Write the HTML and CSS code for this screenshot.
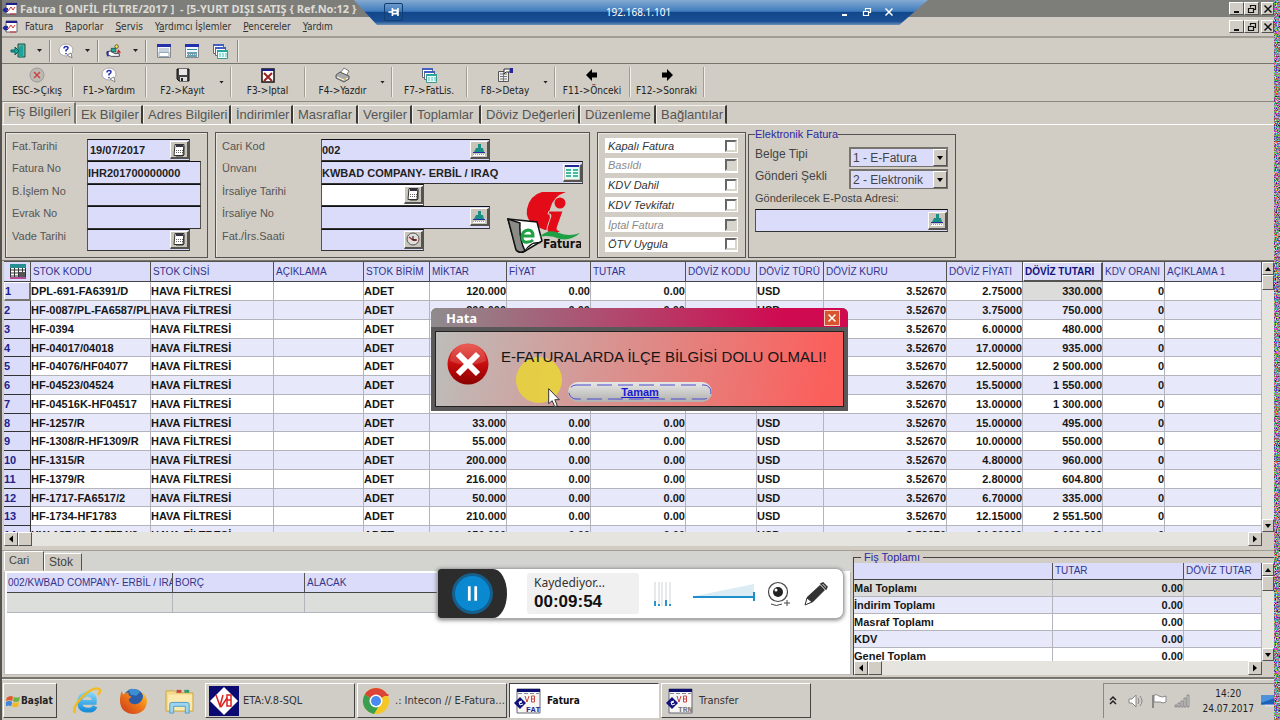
FILE: index.html
```html
<!DOCTYPE html>
<html lang="tr">
<head>
<meta charset="utf-8">
<title>Fatura</title>
<link rel="stylesheet" href="styles.css">
</head>
<body>
<svg class="defs" aria-hidden="true">
  <defs>
    <linearGradient id="gBall" x1="0" y1="0" x2="0" y2="1"><stop offset="0" stop-color="#e8433a"/><stop offset=".5" stop-color="#c80d0d"/><stop offset="1" stop-color="#8a0000"/></linearGradient>
    <linearGradient id="gIe" x1="0" y1="0" x2="0" y2="1"><stop offset="0" stop-color="#7fd4f8"/><stop offset="1" stop-color="#1b8fd8"/></linearGradient>
    <linearGradient id="gFox" x1="1" y1="0" x2="0" y2="1"><stop offset="0" stop-color="#ffcb3a"/><stop offset=".45" stop-color="#f07a18"/><stop offset="1" stop-color="#c7361a"/></linearGradient>
    <symbol id="app" viewBox="0 0 16 14"><path d="M4 1h11v11H4z" fill="#fff" stroke="#667"/><path d="M4 1h11v2H4z" fill="#1a1f8a"/><path d="M6 9l3-4 2 3 2-3" stroke="#c33" fill="none"/><path d="M1 8a3 3 0 0 1 5-1L4 9h2a3 3 0 0 1-5-1z" fill="#2228a0" stroke="#2228a0"/><path d="M8 12h6" stroke="#c33"/></symbol>
    <symbol id="help" viewBox="0 0 16 16"><ellipse cx="8" cy="7" rx="7" ry="6" fill="#fff" stroke="#aaa"/><path d="M9 12l5 3-1-5z" fill="#fff" stroke="#888"/><path d="M6 5.500q0-2 2-2t2 1.500q0 1.200-2 2.200V8.500M8 10v1.200" fill="none" stroke="#2430b0" stroke-width="1.500"/></symbol>
    <symbol id="door" viewBox="0 0 16 16"><path d="M8 1h7v13H8z" fill="#7a8" stroke="#155"/><path d="M9 4l4-2v11l-4 2z" fill="#19a59b"/><path d="M1 7h4V4l4 4-4 4V9H1z" fill="#15a79c" stroke="#066"/></symbol>
    <symbol id="tools" viewBox="0 0 18 16"><path d="M1 9l4-1 5 3h5v3H6l-5-2z" fill="#fff" stroke="#335"/><path d="M1 8h2v6H1z" fill="#2430a0"/><circle cx="12" cy="3" r="2" fill="#f4e638" stroke="#554"/><path d="M6 5h5v4H6z" fill="#2aa79c" stroke="#155"/><path d="M14 6l3 4h-5z" fill="#b22"/></symbol>
    <symbol id="win" viewBox="0 0 16 16"><path d="M1.500 1.500h13v13h-13z" fill="#f3f7ff" stroke="#888"/><path d="M1 1h14v3H1z" fill="#2430a8"/><path d="M3 6h10M3 8h10" stroke="#9ab"/><path d="M3 9.500h10v4H3z" fill="#fff" stroke="#9ab"/></symbol>
    <symbol id="winf" viewBox="0 0 16 16"><path d="M1.500 1.500h13v13h-13z" fill="#f3f7ff" stroke="#888"/><path d="M1 1h14v3H1z" fill="#2430a8"/><path d="M3 6.500h10" stroke="#38a"/><path d="M3 9h10v5H3z" fill="#6d9fae"/><path d="M3 11.500h10" stroke="#cfe2e8" stroke-dasharray="1 1"/></symbol>
    <symbol id="wins" viewBox="0 0 16 16"><path d="M1.500 1.500h10v9h-10z" fill="#fff" stroke="#667"/><path d="M1 1h11v2H1z" fill="#4360c0"/><path d="M3.500 4.500h10v8h-10z" fill="#fff" stroke="#667"/><path d="M3 4h11v2H3z" fill="#4360c0"/><path d="M5.500 7.500h10v8h-10z" fill="#e6fffa" stroke="#498"/><path d="M5 7h11v2H5z" fill="#2aa79c"/><path d="M7 11h8M7 13h8" stroke="#5bb" stroke-dasharray="2 1"/></symbol>
    <symbol id="esc" viewBox="0 0 16 16"><circle cx="8" cy="8" r="7" fill="#bdbab2" stroke="#999"/><path d="M5 5l6 6M11 5l-6 6" stroke="#cc4444" stroke-width="1.500"/></symbol>
    <symbol id="disk" viewBox="0 0 16 16"><path d="M2 2h12v12H4l-2-2z" fill="#444" stroke="#111"/><path d="M4 2h8v6H4z" fill="#e8e8e8"/><path d="M5 10h7v4H5z" fill="#ddd"/><path d="M6 11h2v3H6z" fill="#222"/></symbol>
    <symbol id="cancel" viewBox="0 0 16 16"><path d="M2 2h12v13H2z" fill="#fff" stroke="#111" stroke-width="1.500"/><path d="M2 2h12v2H2z" fill="#1a1f8a"/><path d="M4 6l8 8M12 6l-8 8" stroke="#a02020" stroke-width="2"/></symbol>
    <symbol id="print" viewBox="0 0 16 16"><path d="M5 6l4-5 5 3-3 5z" fill="#fff" stroke="#777"/><path d="M1 8l4-3 9 4v3l-5 3-8-4z" fill="#aaa" stroke="#555"/><path d="M2 10l7 3 4-2" stroke="#fff" fill="none"/><path d="M9 12h2" stroke="#c9b23c" stroke-width="1.500"/></symbol>
    <symbol id="detail" viewBox="0 0 16 16"><path d="M1.500 4.500h10v10h-10z" fill="#eee" stroke="#555"/><path d="M3 7h7M3 9.500h7M3 12h7M6.500 6v8" stroke="#777"/><path d="M7 2h6v3H9l-2 2z" fill="#fff" stroke="#333"/><path d="M13 1h3v5h-3z" fill="#22289a"/></symbol>
    <symbol id="left" viewBox="0 0 12 12"><path d="M0 6l6-6v3.500h5v5H6V12z"/></symbol>
    <symbol id="right" viewBox="0 0 12 12"><path d="M12 6L6 0v3.500H1v5h5V12z"/></symbol>
    <symbol id="cal" viewBox="0 0 14 14"><path d="M3 1.500h9l-1 11H2z" fill="#fff" stroke="#333"/><path d="M4 3h7" stroke="#334" stroke-width="2"/><path d="M4 7.500h7M4 9.500h7" stroke="#666" stroke-dasharray="1 1"/><path d="M12 3v9l-1 1H4" fill="none" stroke="#333"/></symbol>
    <symbol id="hand" viewBox="0 0 14 14"><path d="M6 1h3v4h2l1 4H2l2-4h2z" fill="#1a8f88"/><path d="M1 9h12v1H1z" fill="#2230a0"/><path d="M1 11h12v2H1z" fill="#fff"/><path d="M1 11.500h12" stroke="#b8a830" stroke-dasharray="1 1"/></symbol>
    <symbol id="list" viewBox="0 0 14 14"><path d="M0 0h14v14H0z" fill="#e8fff6"/><path d="M0 0h14v2H0z" fill="#22289a"/><path d="M1 5h5M8 5h5M1 8h5M8 8h5M1 11h5M8 11h5" stroke="#14a088" stroke-width="1.500"/></symbol>
    <symbol id="clock" viewBox="0 0 14 14"><circle cx="7" cy="7" r="6" fill="#ddd" stroke="#555"/><path d="M3 5l4 3h4" fill="none" stroke="#a22" stroke-width="1.300"/><path d="M7 4v4h3" fill="none" stroke="#111"/></symbol>
    <symbol id="grid" viewBox="0 0 16 15"><path d="M0 0h16v15H0z" fill="#fff"/><path d="M.5.500h15v14H.5zM.5 6h15M.5 9h15M.5 12h15M4.500 3v12M8.500 3v12M12.500 3v12" fill="none" stroke="#333"/><path d="M0 0h16v4H0z" fill="#268e90"/><path d="M9 8h6v5H9z" fill="#555"/><path d="M0 14h16" stroke="#b24a9a" stroke-width="2"/></symbol>
    <symbol id="sup" viewBox="0 0 8 8"><path d="M4 2l3 4H1z"/></symbol>
    <symbol id="sdn" viewBox="0 0 8 8"><path d="M4 6l3-4H1z"/></symbol>
    <symbol id="slf" viewBox="0 0 8 8"><path d="M2 4l4-3.500v7z"/></symbol>
    <symbol id="srt" viewBox="0 0 8 8"><path d="M6 4L2 .5v7z"/></symbol>
    <symbol id="wmin" viewBox="0 0 10 10"><path d="M2 8h5" stroke="currentColor" stroke-width="2"/></symbol>
    <symbol id="wres" viewBox="0 0 10 10"><path d="M3.500 3.500v-2h5v4h-2M1.500 4.500h5v4h-5zM3 1.500h6M1 4.500h6" fill="none" stroke="currentColor" stroke-width="1.200"/></symbol>
    <symbol id="wcls" viewBox="0 0 10 10"><path d="M1.500 1.500l7 7M8.500 1.500l-7 7" stroke="currentColor" stroke-width="1.500"/></symbol>
    <symbol id="v8" viewBox="0 0 26 26"><path d="M3 1h23v24H3z" fill="#f6f6f4" stroke="#667"/><path d="M3 1h23v3H3z" fill="#0d1070"/><path d="M4 5.500h21" stroke="#889" stroke-dasharray="4 2"/><path d="M11 8l2 6 2-6" fill="none" stroke="#c44"/><path d="M17.500 8h3v6h-3zM17.500 11h3" fill="none" stroke="#c44"/><path d="M0 15l6-6 6 6-6 6z" fill="#12127c"/><path d="M8 13l-3 1 1 3 3-1M5 15l3-1" stroke="#fff" fill="none"/></symbol>
  </defs>
</svg>

<div class="app">
  <header class="titlebar">
    <svg class="i16"><use href="#app"/></svg>
    <h1>Fatura [ ONFİL FİLTRE/2017 ]&nbsp; - [5-YURT DIŞI SATIŞ { Ref.No:12 }</h1>
    <div class="winbtns"><button aria-label="Simge durumu"><svg><use href="#wmin"/></svg></button><button aria-label="Geri yükle"><svg><use href="#wres"/></svg></button><button aria-label="Kapat"><svg><use href="#wcls"/></svg></button></div>
  </header>
  <nav class="menubar">
    <svg class="i16"><use href="#app"/></svg>
    <button>Fatura</button><button><u>R</u>aporlar</button><button><u>S</u>ervis</button><button>Y<u>a</u>rdımcı İşlemler</button><button><u>P</u>encereler</button><button><u>Y</u>ardım</button>
    <div class="winbtns"><button aria-label="Simge durumu"><svg><use href="#wmin"/></svg></button><button aria-label="Geri yükle"><svg><use href="#wres"/></svg></button><button aria-label="Kapat"><svg><use href="#wcls"/></svg></button></div>
  </nav>
  <div class="quickbar">
    <div class="qgroup"><button aria-label="Çıkış"><svg class="i16"><use href="#door"/></svg></button><i class="caret"></i></div>
    <div class="qgroup"><button aria-label="Yardım"><svg class="i16"><use href="#help"/></svg></button><i class="caret"></i></div>
    <div class="qgroup"><button aria-label="Araçlar"><svg class="i16"><use href="#tools"/></svg></button><i class="caret"></i></div>
    <div class="qgroup wide"><button aria-label="Pencere"><svg class="i16"><use href="#win"/></svg></button><button aria-label="Döşe"><svg class="i16"><use href="#winf"/></svg></button><button aria-label="Basamakla"><svg class="i16"><use href="#wins"/></svg></button></div>
  </div>
  <div class="actions">
    <div><button><svg class="i16"><use href="#esc"/></svg>ESC-&gt;Çıkış</button></div>
    <div><button><svg class="i16"><use href="#help"/></svg>F1-&gt;Yardım</button></div>
    <div class="drop"><button><svg class="i16"><use href="#disk"/></svg>F2-&gt;Kayıt</button><i class="caret"></i></div>
    <div><button><svg class="i16"><use href="#cancel"/></svg>F3-&gt;Iptal</button></div>
    <div class="drop"><button><svg class="i16"><use href="#print"/></svg>F4-&gt;Yazdır</button><i class="caret"></i></div>
    <div><button><svg class="i16"><use href="#wins"/></svg>F7-&gt;FatLis.</button></div>
    <div class="drop"><button><svg class="i16"><use href="#detail"/></svg>F8-&gt;Detay</button><i class="caret"></i></div>
    <div><button><svg class="arrow"><use href="#left"/></svg>F11-&gt;Önceki</button></div>
    <div><button><svg class="arrow"><use href="#right"/></svg>F12-&gt;Sonraki</button></div>
  </div>
  <div class="tabs">
    <button class="on">Fiş Bilgileri</button><button>Ek Bilgiler</button><button>Adres Bilgileri</button><button>İndirimler</button><button>Masraflar</button><button>Vergiler</button><button>Toplamlar</button><button>Döviz Değerleri</button><button>Düzenleme</button><button>Bağlantılar</button>
  </div>

  <form class="form">
    <section class="panel invoice">
      <label for="f1">Fat.Tarihi</label><div class="field w-date inset"><input id="f1" value="19/07/2017"><button type="button" aria-label="Takvim"><svg><use href="#cal"/></svg></button></div>
      <label for="f2">Fatura No</label><div class="field"><input id="f2" value="IHR201700000000"></div>
      <label for="f3">B.İşlem No</label><div class="field"><input id="f3"></div>
      <label for="f4">Evrak No</label><div class="field"><input id="f4"></div>
      <label for="f5">Vade Tarihi</label><div class="field w-date"><input id="f5"><button type="button" aria-label="Takvim"><svg><use href="#cal"/></svg></button></div>
    </section>
    <section class="panel account">
      <label for="a1">Cari Kod</label><div class="field w-code"><input id="a1" value="002"><button type="button" aria-label="Seç"><svg><use href="#hand"/></svg></button></div>
      <label for="a2">Ünvanı</label><div class="field"><input id="a2" value="KWBAD COMPANY- ERBİL / IRAQ"><button type="button" aria-label="Liste"><svg><use href="#list"/></svg></button></div>
      <label for="a3">İrsaliye Tarihi</label><div class="field w-date white"><input id="a3"><button type="button" aria-label="Takvim"><svg><use href="#cal"/></svg></button></div>
      <label for="a4">İrsaliye No</label><div class="field w-code"><input id="a4"><button type="button" aria-label="Seç"><svg><use href="#hand"/></svg></button></div>
      <label for="a5">Fat./İrs.Saati</label><div class="field w-date"><input id="a5"><button type="button" aria-label="Saat"><svg><use href="#clock"/></svg></button></div>
      <svg class="logo" viewBox="0 0 74 62" role="img" aria-label="e-Fatura">
        <path d="M35 1h24q-13 4-16 17-2 13 5 20l-10 1-10-4q-10-7-8-17Q23 4 35 1z" fill="#e30b17"/>
        <circle cx="53" cy="12" r="5.500" fill="#e30b17"/>
        <path d="M42 20h14l-6 17q0 4 4 2-3 5-10 4-6-2-3-9l3-9q0-3-3-2z" fill="#e30b17" stroke="#d1cdc4"/>
        <path d="M1 28l9 32q4 3 8 0l17-10-5-19z" fill="#fff" stroke="#111" stroke-width="1.500"/>
        <path d="M1 28l8 31q4 4 9 1-6-12-5-28z" fill="#8b8b88" stroke="#111" stroke-width="1.500"/>
        <path d="M17 60q8-12 18-8l-9 1z" fill="#111"/>
        <path d="M15 45h11q0-6-5-6-6 1-6 7t6 5q3 0 5-2" fill="none" stroke="#20a045" stroke-width="3"/>
        <path d="M32 46q10-9 20-4 10 4 21 0-9 8-20 6-11-5-21-2z" fill="#20a045"/>
        <text x="36" y="57">Fatura</text>
      </svg>
    </section>
    <section class="panel checks">
      <label>Kapalı Fatura<input type="checkbox"></label>
      <label class="off">Basıldı<input type="checkbox" disabled></label>
      <label>KDV Dahil<input type="checkbox"></label>
      <label>KDV Tevkifatı<input type="checkbox"></label>
      <label class="off">İptal Fatura<input type="checkbox" disabled></label>
      <label>ÖTV Uygula<input type="checkbox"></label>
    </section>
    <fieldset class="einv">
      <legend>Elektronik Fatura</legend>
      <div class="pair"><label for="e1">Belge Tipi</label><span class="combo"><select id="e1"><option>1 - E-Fatura</option></select><i><svg><use href="#sdn"/></svg></i></span></div>
      <div class="pair"><label for="e2">Gönderi Şekli</label><span class="combo"><select id="e2"><option>2 - Elektronik</option></select><i><svg><use href="#sdn"/></svg></i></span></div>
      <label for="e3">Gönderilecek E-Posta Adresi:</label>
      <div class="field mail"><input id="e3"><button type="button" aria-label="Seç"><svg><use href="#hand"/></svg></button></div>
    </fieldset>
  </form>

  <div class="gridbox">
    <div class="clip">
    <table class="stock">
      <colgroup><col class="c27"><col class="c120"><col class="c123"><col class="c90"><col class="c66"><col class="c77"><col class="c84"><col class="c95"><col class="c71"><col class="c67"><col class="c123"><col class="c76"><col class="c80"><col class="c62"><col></colgroup>
      <thead><tr><th class="corner"><svg><use href="#grid"/></svg></th><th>STOK KODU</th><th>STOK CİNSİ</th><th>AÇIKLAMA</th><th>STOK BİRİM</th><th>MİKTAR</th><th>FİYAT</th><th>TUTAR</th><th>DÖVİZ KODU</th><th>DÖVİZ TÜRÜ</th><th>DÖVİZ KURU</th><th>DÖVİZ FİYATI</th><th class="sel">DÖVİZ TUTARI</th><th>KDV ORANI</th><th>AÇIKLAMA 1</th></tr></thead>
      <tbody>
        <tr><th class="cur">1</th><td>DPL-691-FA6391/D</td><td>HAVA FİLTRESİ</td><td></td><td>ADET</td><td>120.000</td><td>0.00</td><td>0.00</td><td></td><td>USD</td><td>3.52670</td><td>2.75000</td><td class="hot">330.000</td><td>0</td><td></td></tr>
        <tr><th>2</th><td>HF-0087/PL-FA6587/PL</td><td>HAVA FİLTRESİ</td><td></td><td>ADET</td><td>200.000</td><td>0.00</td><td>0.00</td><td></td><td>USD</td><td>3.52670</td><td>3.75000</td><td>750.000</td><td>0</td><td></td></tr>
        <tr><th>3</th><td>HF-0394</td><td>HAVA FİLTRESİ</td><td></td><td>ADET</td><td>80.000</td><td>0.00</td><td>0.00</td><td></td><td>USD</td><td>3.52670</td><td>6.00000</td><td>480.000</td><td>0</td><td></td></tr>
        <tr><th>4</th><td>HF-04017/04018</td><td>HAVA FİLTRESİ</td><td></td><td>ADET</td><td>55.000</td><td>0.00</td><td>0.00</td><td></td><td>USD</td><td>3.52670</td><td>17.00000</td><td>935.000</td><td>0</td><td></td></tr>
        <tr><th>5</th><td>HF-04076/HF04077</td><td>HAVA FİLTRESİ</td><td></td><td>ADET</td><td>200.000</td><td>0.00</td><td>0.00</td><td></td><td>USD</td><td>3.52670</td><td>12.50000</td><td>2 500.000</td><td>0</td><td></td></tr>
        <tr><th>6</th><td>HF-04523/04524</td><td>HAVA FİLTRESİ</td><td></td><td>ADET</td><td>100.000</td><td>0.00</td><td>0.00</td><td></td><td>USD</td><td>3.52670</td><td>15.50000</td><td>1 550.000</td><td>0</td><td></td></tr>
        <tr><th>7</th><td>HF-04516K-HF04517</td><td>HAVA FİLTRESİ</td><td></td><td>ADET</td><td>100.000</td><td>0.00</td><td>0.00</td><td></td><td>USD</td><td>3.52670</td><td>13.00000</td><td>1 300.000</td><td>0</td><td></td></tr>
        <tr><th>8</th><td>HF-1257/R</td><td>HAVA FİLTRESİ</td><td></td><td>ADET</td><td>33.000</td><td>0.00</td><td>0.00</td><td></td><td>USD</td><td>3.52670</td><td>15.00000</td><td>495.000</td><td>0</td><td></td></tr>
        <tr><th>9</th><td>HF-1308/R-HF1309/R</td><td>HAVA FİLTRESİ</td><td></td><td>ADET</td><td>55.000</td><td>0.00</td><td>0.00</td><td></td><td>USD</td><td>3.52670</td><td>10.00000</td><td>550.000</td><td>0</td><td></td></tr>
        <tr><th>10</th><td>HF-1315/R</td><td>HAVA FİLTRESİ</td><td></td><td>ADET</td><td>200.000</td><td>0.00</td><td>0.00</td><td></td><td>USD</td><td>3.52670</td><td>4.80000</td><td>960.000</td><td>0</td><td></td></tr>
        <tr><th>11</th><td>HF-1379/R</td><td>HAVA FİLTRESİ</td><td></td><td>ADET</td><td>216.000</td><td>0.00</td><td>0.00</td><td></td><td>USD</td><td>3.52670</td><td>2.80000</td><td>604.800</td><td>0</td><td></td></tr>
        <tr><th>12</th><td>HF-1717-FA6517/2</td><td>HAVA FİLTRESİ</td><td></td><td>ADET</td><td>50.000</td><td>0.00</td><td>0.00</td><td></td><td>USD</td><td>3.52670</td><td>6.70000</td><td>335.000</td><td>0</td><td></td></tr>
        <tr><th>13</th><td>HF-1734-HF1783</td><td>HAVA FİLTRESİ</td><td></td><td>ADET</td><td>210.000</td><td>0.00</td><td>0.00</td><td></td><td>USD</td><td>3.52670</td><td>12.15000</td><td>2 551.500</td><td>0</td><td></td></tr>
        <tr><th>14</th><td>KW-1874/2-FA5774/2</td><td>HAVA FİLTRESİ</td><td></td><td>ADET</td><td>150.000</td><td>0.00</td><td>0.00</td><td></td><td>USD</td><td>3.52670</td><td>14.20000</td><td>2 130.000</td><td>0</td><td></td></tr>
      </tbody>
    </table>
    </div>
    <div class="vs"><button aria-label="Yukarı"><svg><use href="#sup"/></svg></button><b></b><button class="end" aria-label="Aşağı"><svg><use href="#sdn"/></svg></button></div>
    <div class="hs"><button aria-label="Sola"><svg><use href="#slf"/></svg></button><b></b><button class="end" aria-label="Sağa"><svg><use href="#srt"/></svg></button></div>
  </div>

  <div class="lower">
    <section class="detail">
      <div class="dtabs"><button class="on">Cari</button><button>Stok</button></div>
      <div class="dbody">
        <table class="ledger"><thead><tr><th>002/KWBAD COMPANY- ERBİL / IRAQ</th><th>BORÇ</th><th>ALACAK</th></tr></thead><tbody><tr><td></td><td></td><td></td></tr></tbody></table>
      </div>
    </section>
    <fieldset class="totals">
      <legend>Fiş Toplamı</legend>
      <div class="tbox">
        <div class="clip">
        <table><colgroup><col class="c199"><col class="c131"><col></colgroup>
          <thead><tr><th></th><th>TUTAR</th><th>DÖVİZ TUTAR</th></tr></thead>
          <tbody>
            <tr class="hot"><td>Mal Toplamı</td><td>0.00</td><td></td></tr>
            <tr><td>İndirim Toplamı</td><td>0.00</td><td></td></tr>
            <tr><td>Masraf Toplamı</td><td>0.00</td><td></td></tr>
            <tr><td>KDV</td><td>0.00</td><td></td></tr>
            <tr><td>Genel Toplam</td><td>0.00</td><td></td></tr>
          </tbody></table>
        </div>
        <div class="vs"><button aria-label="Yukarı"><svg><use href="#sup"/></svg></button><b></b><button class="end" aria-label="Aşağı"><svg><use href="#sdn"/></svg></button></div>
        <div class="hs"><button aria-label="Sola"><svg><use href="#slf"/></svg></button><b></b><button class="end" aria-label="Sağa"><svg><use href="#srt"/></svg></button></div>
      </div>
    </fieldset>
  </div>

  <footer class="taskbar">
    <button class="start"><svg viewBox="0 0 16 16"><path d="M1 4q4-3 7-1L7 8q-3-2-7 0z" fill="#e2572a"/><path d="M9 3q3 2 7 0l-1 5q-4 2-7 0z" fill="#6db33f"/><path d="M0 9q4-2 7 0l-1 5q-3-2-6 0z" fill="#3b86d8"/><path d="M8 9q3 2 7 0l-1 5q-4 2-7 0z" fill="#f5b91f"/></svg>Başlat</button>
    <div class="pins">
      <button aria-label="Internet Explorer"><svg viewBox="0 0 30 30"><path d="M7 17h15q1-8-7-9-8 1-8 9t9 8q5 0 7-4" fill="none" stroke="url(#gIe)" stroke-width="5"/><path d="M2 28q-3-7 9-18T28 4q0 3-2 5" fill="none" stroke="#f4b91e" stroke-width="2.500"/></svg></button>
      <button aria-label="Firefox"><svg viewBox="0 0 30 30"><circle cx="15" cy="14" r="11" fill="#2a5ca8"/><path d="M10 4q5-3 12 2l-4 4-6-1z" fill="#3c8fd0"/><path d="M3 5q0 3 2 4 2-3 5-2-1 3 3 4l-3 3q1 5 7 5 5-1 7-5 2-4-1-8 6 4 6 10-1 12-14 13Q2 28 1 16 1 9 3 5z" fill="url(#gFox)"/></svg></button>
      <button aria-label="Dosya gezgini"><svg viewBox="0 0 30 30"><path d="M1 5h9l2 2h17v19H1z" fill="#f3d98b" stroke="#caa64c"/><path d="M3 9h25v16H3z" fill="#fbe9ae"/><path d="M12 4h5v3h-5z" fill="#c43"/><path d="M20 4h5v3h-5z" fill="#396"/><path d="M5 28v-9q0-2 2-2h16q2 0 2 2v9h-4v-7H9v7z" fill="#9fd4ef" stroke="#4e9cc8"/></svg></button>
    </div>
    <div class="tasks">
      <button><svg viewBox="0 0 30 30"><path d="M0 0h30v30H0z" fill="#0a0a70"/><path d="M15 1l14 14-14 14L1 15z" fill="#fff"/><path d="M7 9l4 11 3-11M12 21l6-9" fill="none" stroke="#d22" stroke-width="1.500"/><path d="M18 9h4v5h-4zM18 14h4v6h-4z" fill="none" stroke="#d22" stroke-width="1.500"/></svg>ETA:V.8-SQL</button>
      <button><svg viewBox="0 0 30 30"><circle cx="15" cy="15" r="13" fill="#f5c722"/><path d="M15 15L3.700 8.500a13 13 0 0 1 22.600 0z" fill="#dc4437"/><path d="M15 15L3.700 8.500A13 13 0 0 0 13 28l5-8z" fill="#3a9e4f"/><path d="M15 9h12.500" stroke="#dc4437" stroke-width="2"/><circle cx="15" cy="15" r="6.500" fill="#fff"/><circle cx="15" cy="15" r="5" fill="#4a8af0"/></svg>.: Intecon // E-Fatura...</button>
      <button class="on"><svg viewBox="0 0 30 30"><use href="#v8" x="0" y="2" width="28" height="26"/><text x="13" y="26" class="fat">FAT</text></svg>Fatura</button>
      <button><svg viewBox="0 0 30 30"><use href="#v8" x="0" y="2" width="28" height="26"/><text x="13" y="26" class="trn">TRN</text></svg>Transfer</button>
    </div>
    <div class="tray">
      <svg viewBox="0 0 10 12" class="chev"><path d="M2 5l3-3 3 3M2 9l3-3 3 3" fill="none" stroke="#222" stroke-width="1.500"/></svg>
      <svg viewBox="0 0 16 16"><path d="M1 6h3l4-4v12l-4-4H1z" fill="#fff" stroke="#888"/><path d="M10 5q2 3 0 6M12 3q4 5 0 10" fill="none" stroke="#888"/></svg>
      <svg viewBox="0 0 16 16"><path d="M2 2v13" stroke="#888" stroke-width="2"/><path d="M3 2q3-1 5 1 3 2 7 0v6q-3 2-6 0H3z" fill="#fff" stroke="#888"/></svg>
      <svg viewBox="0 0 16 16"><path d="M1 14v-2h2v2zM4 14v-4h2v4zM7 14V8h2v6zM10 14V5h2v9zM13 14V2h2v12z" fill="#ccc" stroke="#777" stroke-width=".7"/></svg>
      <time>14:20<br>24.07.2017</time>
      <svg viewBox="0 0 14 12" class="desk"><path d="M0 0h14v10H0z" fill="#1c62b8"/><path d="M0 0h14v3L0 8z" fill="#4c93dc"/><path d="M4 11h10" stroke="#dde" stroke-width="2"/></svg>
    </div>
  </footer>
</div>
<svg class="noise" aria-hidden="true"><filter id="n" x="0" y="0" width="100%" height="100%" color-interpolation-filters="sRGB"><feTurbulence type="fractalNoise" baseFrequency=".8" numOctaves="2" seed="4"/><feColorMatrix values="2 0 0 0 -.45  0 2 0 0 -.48  0 0 2 0 -.42  0 0 0 0 1"/></filter><rect width="100%" height="100%" filter="url(#n)"/></svg>

<div class="rdp">
  <button class="pin" aria-label="Sabitle"><svg viewBox="0 0 14 10"><path d="M0 5h5M5 0v10M5 3h6v4H5M12 0v10" fill="none" stroke="#fff" stroke-width="2"/></svg></button>
  <span>192.168.1.101</span>
  <div><button aria-label="Simge durumu"><svg><use href="#wmin"/></svg></button><button aria-label="Geri yükle"><svg><use href="#wres"/></svg></button><button aria-label="Kapat"><svg><use href="#wcls"/></svg></button></div>
</div>

<div class="dialog" role="alertdialog" aria-labelledby="dt">
  <div class="dhead"><h2 id="dt">Hata</h2><button aria-label="Kapat"><svg><use href="#wcls"/></svg></button></div>
  <div class="dmain">
    <svg class="err" viewBox="0 0 42 42"><circle cx="21" cy="21" r="20.500" fill="url(#gBall)"/><path d="M3 18a18 17 0 0 1 36 0q-18 8-36 0z" fill="#fff" opacity=".15"/><path d="M11 11l20 20M31 11L11 31" stroke="#fff" stroke-width="6"/></svg>
    <i class="spot"></i>
    <p>E-FATURALARDA İLÇE BİLGİSİ DOLU OLMALI!</p>
    <button class="ok"><svg><rect x="1" y="3" width="142" height="14" rx="7" fill="none" stroke="#4a4ad0" stroke-dasharray="15 6"/></svg><span>Tamam</span></button>
    <svg class="cursor" viewBox="0 0 12 20"><path d="M.7.700v15l3.500-3 2.500 6 2.600-1-2.500-6h4.500z" fill="#fff" stroke="#333"/></svg>
  </div>
</div>

<div class="rec">
  <div class="pausebox"><button aria-label="Duraklat"><svg viewBox="0 0 12 16"><path d="M2.500 0v16M9.500 0v16" stroke="#fff" stroke-width="3"/></svg></button></div>
  <div class="status"><span>Kaydediyor...</span><strong>00:09:54</strong></div>
  <svg class="bars" viewBox="0 0 18 24"><path d="M2 0v24M6 0v24M9 0v24M13 0v24M17 0v24" stroke="#dfe3e6" stroke-width="1.500"/><path d="M2 19v5M6 22v2M13 18v6M17 22v2" stroke="#2a94cc" stroke-width="2"/></svg>
  <svg class="vol" viewBox="0 0 62 20"><path d="M2 12L61 0v12z" fill="#dcecf4"/><path d="M0 13h61M61 8v9" stroke="#1e8fca" stroke-width="2"/></svg>
  <svg class="cam" viewBox="0 0 24 26"><circle cx="11" cy="11" r="9.500" fill="#fff" stroke="#444" stroke-width="1.200"/><circle cx="11" cy="11" r="5" fill="#222"/><circle cx="9" cy="9" r="1.500" fill="#fff"/><path d="M4 23q5 3 11 0M20 19v6M17 22h6" stroke="#444" fill="none"/></svg>
  <svg class="pen" viewBox="0 0 24 24"><path d="M1 23l2-8L16 3l5 5L9 20z" fill="#333"/><path d="M1 23l2-7 5 4z" fill="#fff" stroke="#333"/><path d="M17 2l2-1 4 4-1 2z" fill="#fff" stroke="#333" stroke-width="1.500"/></svg>
</div>
</body>
</html>
```
FILE: styles.css
```css
* { box-sizing: border-box; }
:root {
  --face: #d1cdc4;
  --lilac: #dadcf9;
  --ui: "DejaVu Sans Condensed", "DejaVu Sans", sans-serif;
  --arial: "Liberation Sans", Arial, sans-serif;
}
body { margin: 0; min-height: 100vh; display: flex; position: relative; background: var(--face); font: 11px/14px var(--arial); color: #222; overflow: hidden; }
button, input, select { font: inherit; color: inherit; margin: 0; padding: 0; border: 0; background: none; border-radius: 0; }
h1, h2, p { margin: 0; }
svg { display: block; flex: none; }
.defs { position: absolute; width: 0; height: 0; }
.app { flex: 1; min-width: 0; display: flex; flex-direction: column; border-left: 2px solid #55534f; }
.noise { width: 6px; height: auto; align-self: stretch; }
.i16 { width: 16px; height: 16px; }

/* window chrome */
.titlebar { display: flex; align-items: center; height: 17px; background: #7d7d7a; gap: 2px; }
.titlebar h1 { flex: 1; font: bold 11px/16px "Noto Sans", sans-serif; color: #dedcd5; white-space: nowrap; }
.menubar { display: flex; align-items: center; height: 21px; border-bottom: 2px solid #a19d94; font: 10px/16px var(--ui); color: #333; }
.menubar > .i16 { margin-right: 7px; }
.menubar > button { margin-right: 12px; }
.winbtns { display: flex; margin-left: auto; }
.winbtns button { width: 15px; height: 13px; display: grid; place-items: center; background: var(--face); color: #111; border: 1px solid; border-color: #fff #55534f #55534f #fff; }
.winbtns button:last-child { margin-left: 2px; width: 13px; }
.winbtns svg, .rdp div svg, .dhead svg { width: 10px; height: 10px; }
.caret { width: 5px; height: 3px; background: #222; clip-path: polygon(0 0, 100% 0, 50% 100%); }
.quickbar { display: flex; height: 26px; align-items: center; border-bottom: 1px solid #77746d; }
.qgroup { display: flex; align-items: center; justify-content: space-between; width: 48px; height: 22px; padding: 0 7px 0 8px; border-right: 1px solid #8d8980; box-shadow: 1px 0 #f1efe9; }
.qgroup.wide { width: 92px; padding: 0 9px 0 10px; }
.actions { display: grid; grid-template-columns: 71px 73px 85px 74px 87px 75px 88px 75px 74px; height: 38px; padding: 3px 0 4px; border-bottom: 1px solid #8d8980; font: 10px/12px var(--ui); }
.actions > div { display: flex; align-items: center; border-right: 1px solid #a19d94; box-shadow: 1px 0 #f1efe9; }
.actions > .drop { padding-right: 6px; }
.actions button { flex: 1; display: grid; justify-items: center; gap: 2px; white-space: nowrap; }
.actions .arrow { width: 12px; height: 12px; margin: 2px; }
.tabs { display: grid; grid-template-columns: 73px 67px 88px 62px 65px 54px 69px 99px 76px 71px; height: 23px; padding-left: 1px; align-items: end; border-bottom: 1px solid #fff; font-size: 13px; color: #555; }
.tabs button { height: 19px; padding: 0 0 0 4px; text-align: left; white-space: nowrap; border: 1px solid; border-color: #f1efe9 #3c3a37 transparent #f1efe9; border-right-width: 2px; }
.tabs button.on { height: 22px; padding-bottom: 2px; border-right-color: #77746d; }

/* entry form */
.form { display: flex; gap: 7px; height: 136px; padding: 7px 3px 2px; border-bottom: 1px solid #77746d; color: #555; }
.panel { border: 1px solid #55534f; box-shadow: inset 1px 1px #e9e6df; }
.invoice, .account { display: grid; grid-auto-rows: minmax(0, 1fr); padding: 6px; }
.invoice { grid-template-columns: 75px minmax(0, 1fr); width: 203px; }
.account { grid-template-columns: 99px minmax(0, 1fr); width: 375px; position: relative; }
.field { display: flex; align-items: center; min-width: 0; background: var(--lilac); border: 1px solid #55534f; border-top-color: #111; border-bottom-color: #333; }
.field input { flex: 1; width: 100%; min-width: 0; height: 100%; font-weight: bold; color: #222; outline: 0; }
.inset input { padding-left: 2px; }
.field button { flex: none; width: 19px; height: 18px; display: grid; place-items: center; background: #c9c5bb; border: 1px solid; border-color: #fff #55534f #55534f #fff; border-width: 1px 2px 2px 1px; }
.field button svg { width: 14px; height: 14px; }
.w-date { width: 103px; }
.w-code { width: 169px; }
.account .field:nth-of-type(2) { width: 262px; }
.white { background: #fff; }
.logo { position: absolute; right: 8px; bottom: 4px; width: 74px; height: 62px; }
.logo text { font: bold 12px var(--ui); fill: #111; }
.checks { width: 149px; padding: 5px 7px; display: flex; flex-direction: column; justify-content: space-between; font-style: italic; color: #333; }
.checks label { display: flex; justify-content: space-between; align-items: center; height: 15px; padding: 0 1px 0 3px; background: #fff; }
.checks .off { color: #8a8a8a; }
.checks input { appearance: none; width: 12px; height: 12px; border: 2px solid; border-color: #666 #d8d5cd #d8d5cd #666; background: #fff; }
.checks .off input { background: #d8d5cd; }
.einv { width: 208px; margin: 0 0 0 -5px; border: 1px solid #55534f; padding: 11px 7px 0 6px; min-width: 0; color: #444; font-size: 12px; }
.einv legend { font-size: 11px; line-height: 4px; padding: 0; color: #2b2aa0; }
.pair { display: flex; justify-content: space-between; height: 20px; margin-bottom: 2px; }
.combo { width: 99px; height: 20px; display: flex; background: var(--lilac); border: 1px solid #77746d; border-width: 2px 1px 1px 2px; font-size: 12px; }
.combo select { appearance: none; flex: 1; min-width: 0; padding-left: 2px; }
.combo i, .vs button, .hs button, .vs b, .hs b { display: grid; place-items: center; background: var(--face); border: 1px solid; border-color: #fff #55534f #55534f #fff; }
.combo i { width: 14px; }
.combo svg, .vs svg, .hs svg { width: 8px; height: 8px; }
.mail { height: 23px; margin-top: 4px; }
.einv > label { display: block; font-size: 11px; line-height: 14px; }

/* grids */
table { border-collapse: separate; border-spacing: 0; table-layout: fixed; width: 100%; }
th, td { padding: 0; overflow: hidden; white-space: nowrap; text-align: left; }
thead th { background: var(--lilac); color: #34348c; font-size: 10px; font-weight: normal; padding-left: 2px; border-right: 1px solid #55534f; border-bottom: 1px solid #444; }
td { font-weight: bold; color: #161616; background: #fff; border-right: 1px solid #b4b4bc; border-bottom: 1px solid #b4b4bc; }
tbody tr:nth-child(even) td { background: #e7e9fa; }
.gridbox, .tbox { display: grid; grid-template-columns: 1fr 12px; }
.gridbox { margin-left: 2px; border-top: 1px solid #55534f; grid-template-rows: 270px 14px; }
.clip { overflow: hidden; }
.stock thead th { height: 20px; }
.stock tbody tr { height: 19px; }
.stock tbody tr:nth-child(4n) { height: 18px; }
.stock tbody th { background: var(--lilac); color: #22228c; border-right: 1px solid #333; border-bottom: 1px solid #333; }
.stock .cur { border: 1px solid; border-color: #fff #77746d #77746d #fff; border-width: 1px 2px 2px 1px; }
.stock td:nth-child(n+6):not(:nth-child(9)):not(:nth-child(10)) { text-align: right; }
.stock .corner svg { width: 16px; height: 15px; margin: 0 auto; }
.stock .sel { font-weight: bold; color: #14147c; border: 1px solid; border-color: #fff #55534f #55534f #fff; border-width: 1px 2px 2px 1px; padding: 0 0 0 1px; }
td.hot, .totals .hot td { background: #dcdcda; }
.c27 { width: 27px; } .c62 { width: 62px; } .c66 { width: 66px; } .c67 { width: 67px; } .c71 { width: 71px; }
.c76 { width: 76px; } .c77 { width: 77px; } .c80 { width: 80px; } .c84 { width: 84px; } .c90 { width: 90px; }
.c95 { width: 95px; } .c120 { width: 120px; } .c123 { width: 123px; } .c131 { width: 131px; } .c199 { width: 199px; }
.vs, .hs { display: flex; background: #e6e4df; }
.vs { flex-direction: column; }
.vs button { height: 13px; }
.vs b { height: 15px; }
.hs button, .hs b { width: 14px; }
.vs .end { margin-top: auto; }
.hs .end { margin-left: auto; }

/* lower area */
.lower { flex: 1; display: flex; gap: 2px; margin-top: 4px; padding: 0 0 2px 2px; border-top: 1px solid #a19d94; border-bottom: 2px solid #77746d; }
.detail { flex: 1; min-width: 0; display: flex; flex-direction: column; background: #d3d3d0; }
.dtabs { display: flex; align-items: end; height: 20px; font: 12px/16px var(--arial); color: #444; }
.dtabs button { height: 18px; width: 38px; padding: 0 0 0 4px; text-align: left; background: var(--face); border: 1px solid; border-color: #fff #55534f transparent #fff; }
.dtabs .on { height: 20px; width: 40px; padding: 0 0 3px 4px; font-size: 11px; }
.dbody { flex: 1; background: #fff; padding: 1px 0 0 2px; border: 1px solid #bbb; border-top-color: #fff; }
.ledger { width: 540px; }
.ledger th:first-child { width: 166px; padding-left: 1px; }
.ledger th:nth-child(2) { width: 132px; }
.ledger th, .ledger td { height: 20px; }
.ledger td { background: #dcdedc; }
.totals { width: 421px; margin: 0; min-width: 0; padding: 0; border: 1px solid #444; border-width: 1px 0 0 1px; }
.totals legend { margin-left: 7px; padding: 0 3px; line-height: 12px; color: #2b2aa0; }
.tbox { grid-template-rows: 98px 14px; }
.totals th { height: 17px; }
.totals td { height: 17px; line-height: 14px; }
.totals td:nth-child(2) { text-align: right; }

/* taskbar */
.taskbar { height: 41px; display: flex; padding: 3px 0 2px 1px; border-top: 1px solid #eceae4; background: #d0cdc7; font: 10px/14px var(--ui); }
.start { display: flex; align-items: center; gap: 1px; width: 54px; font-weight: bold; border: 1px solid; border-color: #fff #444 #444 #fff; }
.start svg { width: 14px; height: 14px; margin-left: 2px; }
.pins { display: flex; align-items: center; gap: 17px; padding: 0 11px 0 16px; }
.pins svg { width: 29px; height: 29px; }
.tasks { display: flex; gap: 2px; }
.tasks button { width: 150px; display: flex; align-items: center; gap: 4px; padding-left: 3px; border: 1px solid; border-color: #fff #444 #444 #fff; color: #333; white-space: nowrap; font-size: 11px; }
.tasks button.on { background: #fff; border-color: #444 #fff #fff #444; font-weight: bold; font-size: 10px; color: #111; }
.tasks svg { width: 30px; height: 30px; }
.tasks text { font: bold 8px "Liberation Mono", monospace; }
.fat { fill: #22228c; } .trn { fill: #777; }
.tray { margin-left: auto; display: flex; align-items: center; gap: 7px; padding-left: 4px; border-left: 1px solid #8d8980; border-top: 1px solid #8d8980; }
.tray svg { width: 16px; height: 16px; }
.tray .chev { width: 10px; height: 12px; margin-right: 3px; }
.tray time { text-align: center; line-height: 15px; margin-left: 6px; }
.tray .desk { width: 13px; height: 12px; }

/* remote desktop bar */
.rdp { position: absolute; top: 0; left: 354px; width: 574px; height: 25px; display: flex; align-items: center; padding: 0 34px 2px 30px; color: #fff; background: linear-gradient(#84aad2, #3f7cbd 45%, #12488b 50%, #1a4f94 85%, #6d91b8); clip-path: polygon(0 0, 100% 0, 95% 100%, 4% 100%); font: 10px/16px "Noto Sans", sans-serif; }
.rdp span { flex: 1; text-align: center; padding-left: 34px; }
.rdp .pin { width: 19px; height: 18px; display: grid; place-items: center; border: 1px solid #133c70; border-radius: 2px; }
.rdp .pin svg { width: 12px; height: 8px; }
.rdp div { display: flex; gap: 12px; }

/* message box */
.dialog { position: absolute; left: 431px; top: 308px; width: 417px; height: 103px; display: flex; flex-direction: column; background: #5a5858; border-radius: 6px 6px 0 0; overflow: hidden; }
.dhead { height: 19px; display: flex; align-items: center; justify-content: space-between; padding: 0 8px 0 15px; background: linear-gradient(90deg, #8f8c8d, #d00a50 85%); color: #fff; }
.dhead h2 { font: bold 13px/18px "Noto Sans", sans-serif; }
.dhead button { width: 16px; height: 16px; display: grid; place-items: center; background: #d9532c; border: 1px solid #f3c9b8; color: #fff; }
.dmain { position: relative; flex: 1; margin: 4px 4px; display: grid; grid-template-columns: 42px 1fr; grid-template-rows: 50px 1fr; column-gap: 12px; align-items: end; border: 1px solid #222; background: linear-gradient(100deg, #bdbdba, #fb5f5c 95%); padding: 0 6px 4px 11px; }
.err { width: 42px; height: 42px; grid-row: 1 / 2; align-self: start; margin-top: 11px; }
.dmain p { position: relative; align-self: center; font-size: 15px; line-height: 18px; color: #161616; white-space: nowrap; }
.spot { position: absolute; left: 80px; top: 25px; width: 46px; height: 46px; border-radius: 50%; background: #e8d33c; opacity: .9; }
.ok { position: absolute; left: 132px; bottom: 4px; width: 144px; height: 20px; border-radius: 10px; background: linear-gradient(#e8e8e6, #b0b0ae); }
.ok svg { position: absolute; inset: 0; width: 144px; height: 20px; }
.ok span { position: relative; font: bold 11px/20px var(--arial); color: #1818d8; text-decoration: underline; }
.cursor { position: absolute; left: 112px; top: 56px; width: 12px; height: 20px; }

/* screen recorder */
.rec { position: absolute; left: 437px; top: 568px; width: 407px; height: 51px; display: flex; align-items: center; background: #fff; border: 1px solid #aaa; border-radius: 4px 8px 8px 4px; box-shadow: 0 1px 4px #777; color: #333; }
.pausebox { width: 69px; height: 49px; display: grid; place-items: center; background: #2c2c2c; border-radius: 3px 14px 14px 3px / 3px 50% 50% 3px; }
.pausebox button { width: 41px; height: 41px; border-radius: 50%; display: grid; place-items: center; background: #0a88d0; border: 3px solid #155f8c; }
.pausebox svg { width: 11px; height: 15px; }
.status { width: 112px; height: 41px; margin-left: 20px; padding: 0 0 0 7px; background: #f0f0f0; border-radius: 3px; display: grid; align-content: start; }
.status span { font: 12px/19px "Noto Sans", sans-serif; }
.status strong { font: bold 17px/20px var(--arial); color: #111; }
.bars { width: 18px; height: 24px; margin-left: 14px; }
.vol { width: 62px; height: 20px; margin-left: 22px; }
.cam { width: 24px; height: 26px; margin-left: 12px; }
.pen { width: 24px; height: 24px; margin-left: 13px; }
```
